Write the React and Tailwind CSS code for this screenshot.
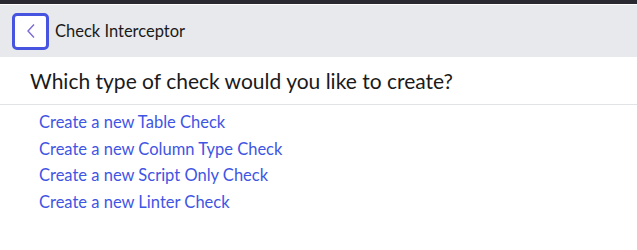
import React from 'react';

const checks = [
    'Create a new Table Check',
    'Create a new Column Type Check',
    'Create a new Script Only Check',
    'Create a new Linter Check',
];

export default function App() {
    return (
        <div className="w-[637px] h-[250px] bg-white font-['Lato',sans-serif] text-[#1a1a1a]">
            <div className="h-[4px] bg-[#2a2932]" />
            <div className="h-[1px] bg-white" />
            {/* Шапка */}
            <div className="h-[52px] bg-[#e8e9ec] flex items-center pl-[12px] gap-[6px]">
                <button className="w-[37px] h-[37px] rounded-[5px] border-[3px] border-[#4654e0] bg-white flex items-center justify-center">
                    <svg width="10" height="16" viewBox="0 0 10 16" fill="none">
                        <path d="M8 1.5 L2 8 L8 14.5" stroke="#7a6ad6" strokeWidth="1.4" />
                    </svg>
                </button>
                <span className="text-[16.5px]">Check Interceptor</span>
            </div>
            <div className="h-[48px] flex items-center pl-[30px] border-b border-[#e2e3e6]">
                <h1 className="text-[21px]">Which type of check would you like to create?</h1>
            </div>
            <div className="pl-[39px] pt-[4px] flex flex-col">
                {checks.map((c) => (
                    <a key={c} href="#" className="text-[16.5px] leading-[26.7px] text-[#3f55e4]">{c}</a>
                ))}
            </div>
        </div>
    );
}
